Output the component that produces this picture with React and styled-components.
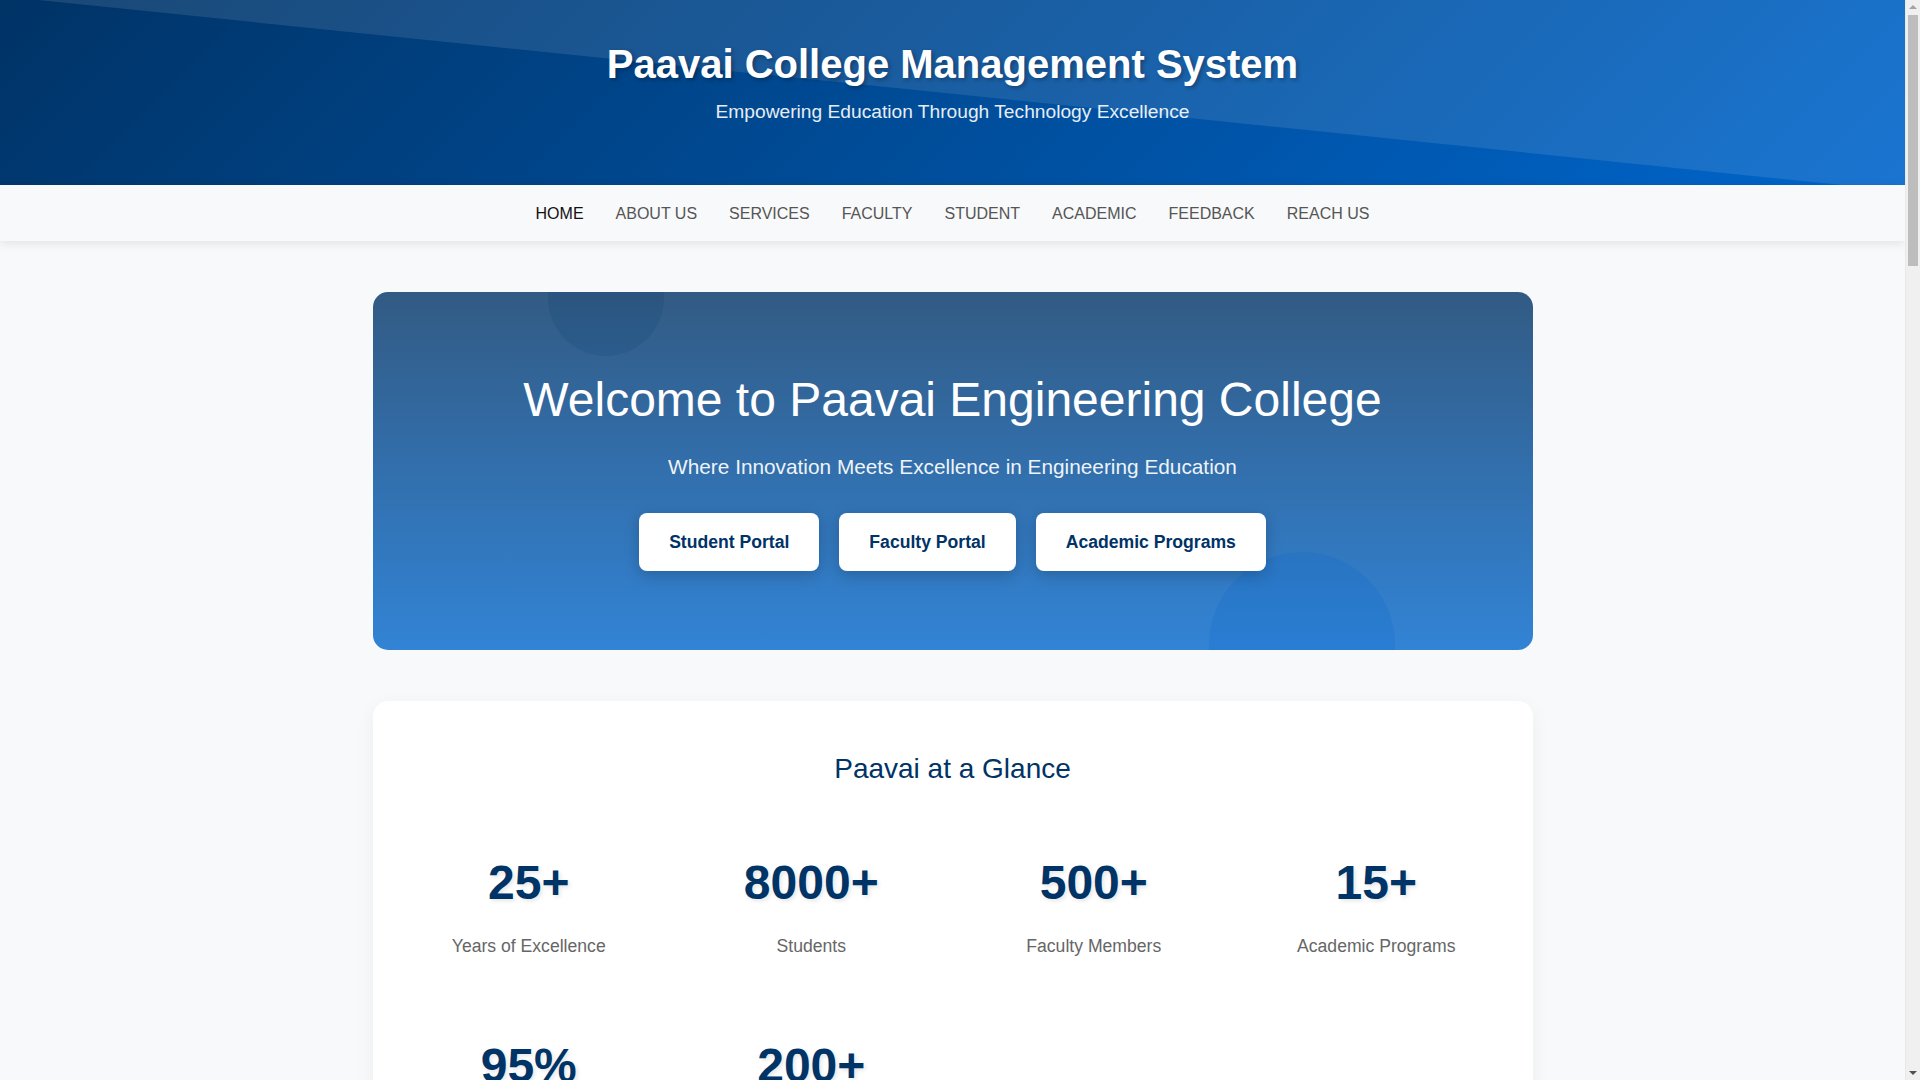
import React from 'react';
import styled, { createGlobalStyle } from 'styled-components';

const GlobalStyle = createGlobalStyle`
  * {
    box-sizing: border-box;
  }
  body {
    margin: 0 15px 0 0;
    background: #f8f9fa;
    font-family: 'Liberation Sans', Arial, sans-serif;
    color: #333;
  }
`;

// fake classic scrollbar, as the screenshot shows one
const ScrollTrack = styled.div`
  position: fixed;
  top: 0;
  right: 0;
  width: 15px;
  height: 100vh;
  background: #f0f0f0;
  border-left: 1px solid #e8e8e8;
  z-index: 10;
`;

const ScrollThumb = styled.div`
  position: absolute;
  top: 15px;
  left: 2px;
  right: 2px;
  height: 251px;
  background: #bdbdbd;
`;

const ScrollArrow = styled.div`
  position: absolute;
  left: 3px;
  width: 0;
  height: 0;
  border-left: 4px solid transparent;
  border-right: 4px solid transparent;
  ${(p) =>
    p.$down
      ? 'bottom: 5px; border-top: 4px solid #505050;'
      : 'top: 5px; border-bottom: 4px solid #a3a3a3;'}
`;

const Header = styled.header`
  position: relative;
  height: 185px;
  padding-top: 41px;
  text-align: center;
  color: #fff;
  background: linear-gradient(135deg, #003366 0%, #0066cc 100%);
  overflow: hidden;

  &::before {
    content: '';
    position: absolute;
    inset: 0;
    background: rgba(255, 255, 255, 0.1);
    clip-path: polygon(2% 0, 100% 0, 100% 100%, 96.7% 100%);
  }
`;

const HeaderTitle = styled.h1`
  position: relative;
  margin: 0 0 14px;
  font-size: 40px;
  line-height: 46px;
  font-weight: 700;
  text-shadow: 2px 2px 4px rgba(0, 0, 0, 0.3);
`;

const HeaderSub = styled.p`
  position: relative;
  margin: 0;
  font-size: 19.2px;
  line-height: 22px;
  opacity: 0.9;
`;

const Nav = styled.nav`
  height: 56px;
  display: flex;
  align-items: center;
  justify-content: center;
  background: #f8f9fa;
  box-shadow: 0 2px 10px rgba(0, 0, 0, 0.1);
  position: relative;
`;

const NavLink = styled.a`
  padding: 9px 16px 7px;
  font-size: 16px;
  line-height: 18px;
  text-decoration: none;
  color: ${(p) => (p.$active ? '#111' : '#555')};
  cursor: pointer;
`;

const Container = styled.main`
  max-width: 1200px;
  margin: 0 auto;
  padding: 51px 20px 50px;
  display: flex;
  flex-direction: column;
  gap: 51px;
`;

const Hero = styled.section`
  position: relative;
  overflow: hidden;
  border-radius: 15px;
  padding: 80px 40px 79px;
  text-align: center;
  color: #fff;
  background: linear-gradient(180deg, rgba(0, 51, 102, 0.8) 0%, rgba(0, 102, 204, 0.8) 100%);
`;

const Bubble = styled.div`
  position: absolute;
  border-radius: 50%;
  width: ${(p) => p.$size}px;
  height: ${(p) => p.$size}px;
  left: ${(p) => p.$left}px;
  top: ${(p) => p.$top}px;
  background: ${(p) => p.$color};
`;

const HeroTitle = styled.h2`
  position: relative;
  margin: 0 0 28px;
  font-size: 48px;
  line-height: 55px;
  font-weight: 400;
`;

const HeroSub = styled.p`
  position: relative;
  margin: 0 0 34px;
  font-size: 20.8px;
  line-height: 24px;
  opacity: 0.92;
`;

const ButtonRow = styled.div`
  position: relative;
  display: flex;
  justify-content: center;
  gap: 20px;
`;

const HeroButton = styled.button`
  border: 0;
  border-radius: 8px;
  padding: 18px 30px;
  background: #fff;
  color: #003366;
  font-family: inherit;
  font-size: 17.6px;
  line-height: 22px;
  font-weight: 700;
  box-shadow: 0 4px 15px rgba(0, 0, 0, 0.2);
  cursor: pointer;
`;

const StatsCard = styled.section`
  background: #fff;
  border-radius: 15px;
  padding: 51px 30px 50px;
  box-shadow: 0 5px 20px rgba(0, 0, 0, 0.05);
`;

const StatsTitle = styled.h3`
  margin: 0 0 46px;
  text-align: center;
  font-size: 28px;
  line-height: 33px;
  font-weight: 400;
  color: #003366;
`;

const StatsGrid = styled.div`
  display: grid;
  grid-template-columns: repeat(4, 1fr);
  gap: 33px 30px;
`;

const StatItem = styled.div`
  padding: 24px 10px;
  text-align: center;
`;

const StatNumber = styled.div`
  font-size: 48px;
  line-height: 55px;
  font-weight: 700;
  color: #003366;
  margin-bottom: 26px;
  text-shadow: 2px 2px 4px rgba(0, 0, 0, 0.1);
`;

const StatLabel = styled.div`
  font-size: 17.6px;
  line-height: 21px;
  color: #666;
`;

const links = ['HOME', 'ABOUT US', 'SERVICES', 'FACULTY', 'STUDENT', 'ACADEMIC', 'FEEDBACK', 'REACH US'];

const stats = [
  { n: '25+', l: 'Years of Excellence' },
  { n: '8000+', l: 'Students' },
  { n: '500+', l: 'Faculty Members' },
  { n: '15+', l: 'Academic Programs' },
  { n: '95%', l: 'Placement Record' },
  { n: '200+', l: 'Industry Partners' },
];

export default function App() {
  return (
    <>
      <GlobalStyle />
      <ScrollTrack>
        <ScrollArrow />
        <ScrollThumb />
        <ScrollArrow $down />
      </ScrollTrack>
      <Header>
        <HeaderTitle>Paavai College Management System</HeaderTitle>
        <HeaderSub>Empowering Education Through Technology Excellence</HeaderSub>
      </Header>
      <Nav>
        {links.map((l, i) => (
          <NavLink key={l} $active={i === 0}>
            {l}
          </NavLink>
        ))}
      </Nav>
      <Container>
        <Hero>
          <Bubble $size={116} $left={175} $top={-52} $color="rgba(0, 51, 102, 0.12)" />
          <Bubble $size={186} $left={836} $top={260} $color="rgba(0, 102, 204, 0.18)" />
          <HeroTitle>Welcome to Paavai Engineering College</HeroTitle>
          <HeroSub>Where Innovation Meets Excellence in Engineering Education</HeroSub>
          <ButtonRow>
            <HeroButton>Student Portal</HeroButton>
            <HeroButton>Faculty Portal</HeroButton>
            <HeroButton>Academic Programs</HeroButton>
          </ButtonRow>
        </Hero>
        <StatsCard>
          <StatsTitle>Paavai at a Glance</StatsTitle>
          <StatsGrid>
            {stats.map((s) => (
              <StatItem key={s.l}>
                <StatNumber>{s.n}</StatNumber>
                <StatLabel>{s.l}</StatLabel>
              </StatItem>
            ))}
          </StatsGrid>
        </StatsCard>
      </Container>
    </>
  );
}
